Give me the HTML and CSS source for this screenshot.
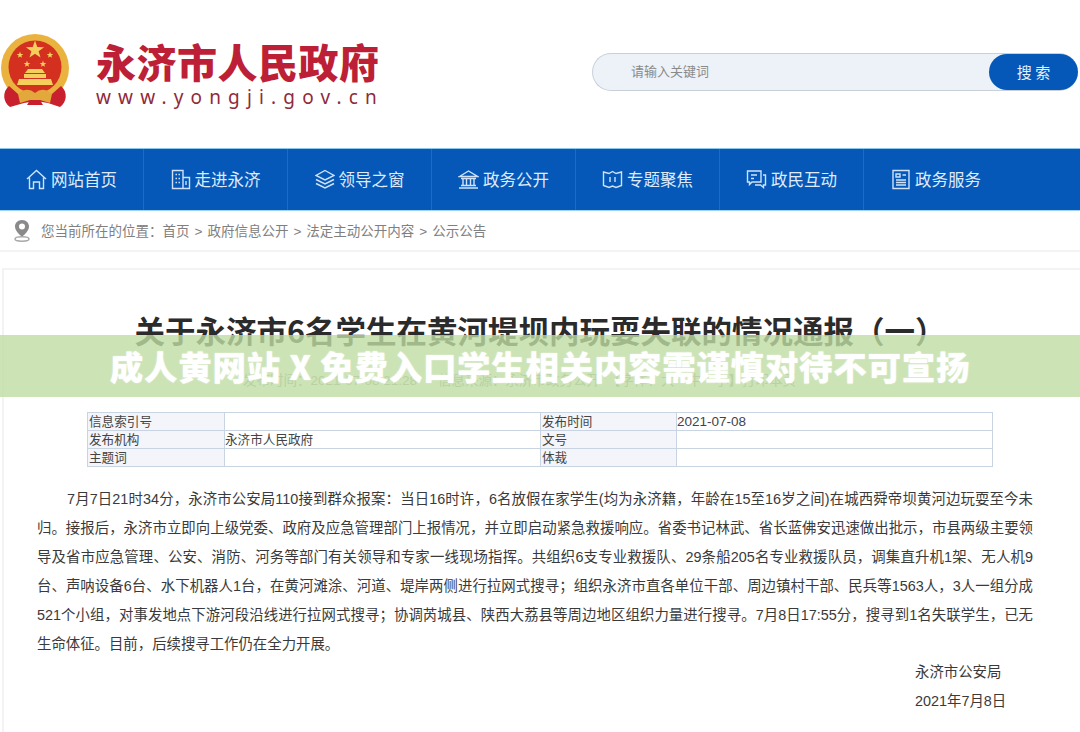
FILE: index.html
```html
<!DOCTYPE html>
<html lang="zh-CN">
<head>
    <meta charset="UTF-8">
    <title>永济市人民政府</title>
    <link rel="stylesheet" href="styles.css">
</head>
<body>
    <div class="header">
        <div class="logo">
            <svg class="emblem" width="72" height="74" viewBox="0 0 72 74">
                <defs>
                    <path id="star" d="M0 -5 L1.200 -1.600 L4.800 -1.500 L1.900 0.600 L2.900 4 L0 2 L-2.900 4 L-1.900 0.600 L-4.800 -1.500 L-1.200 -1.600 Z"/>
                </defs>
                <circle cx="35" cy="34" r="34" fill="#eab33f"/>
                <circle cx="35" cy="33" r="26.500" fill="#d4301f"/>
                <g fill="#f5cf5c">
                    <use href="#star" transform="translate(35 16) scale(1.900)"/>
                    <use href="#star" transform="translate(20 21) scale(0.700)"/>
                    <use href="#star" transform="translate(50 21) scale(0.700)"/>
                    <use href="#star" transform="translate(27 30) scale(0.700)"/>
                    <use href="#star" transform="translate(43 30) scale(0.700)"/>
                    <path d="M28 35 L42 35 L45 39 L25 39 Z M24 40 L46 40 L46 44 L24 44 Z M19 45 L51 45 L53 51 L17 51 Z"/>
                </g>
                <path d="M9 52 C2 58 3 68 10 73 L24 69 L36 67 L48 69 L60 73 C67 68 68 58 61 52 L52 60 L18 60 Z" fill="#c8202c"/>
                <path d="M18 60 Q27 52 35 59 Q43 52 52 60 L50 69 L40 66 L30 66 L20 69 Z" fill="#e3a83c"/>
                <path d="M27 71 L43 71 L40 66 L30 66 Z" fill="#c8202c"/>
            </svg>
            <div class="logo-text">
                <div class="logo-name">永济市人民政府</div>
                <div class="logo-url">www.yongji.gov.cn</div>
            </div>
        </div>
        <div class="search">
            <span class="search-hint">请输入关键词</span>
            <button class="search-btn">搜 索</button>
        </div>
    </div>

    <div class="nav">
        <div class="nav-item">
            <svg width="21" height="21" viewBox="0 0 21 21"><path d="M1 10 L10.500 1.500 L20 10 M3.500 8.500 V19.500 H7.500 V13 H13.500 V19.500 H17.500 V8.500"/></svg>
            <span>网站首页</span>
        </div>
        <div class="nav-item">
            <svg width="20" height="21" viewBox="0 0 20 21"><path d="M1.500 19.500 V1.500 H12 V19.500 Z M12 8.500 H18.500 V19.500 H1 M4.500 5.500 H6 M7.500 5.500 H9 M4.500 9.500 H6 M7.500 9.500 H9 M4.500 13.500 H6 M7.500 13.500 H9 M15 12 V16"/></svg>
            <span>走进永济</span>
        </div>
        <div class="nav-item">
            <svg width="20" height="21" viewBox="0 0 20 21"><path d="M10 1.500 L19 6.500 L10 11 L1 6.500 Z M1 10.500 L10 15 L19 10.500 M1 14.500 L10 19 L19 14.500"/></svg>
            <span>领导之窗</span>
        </div>
        <div class="nav-item">
            <svg width="21" height="21" viewBox="0 0 21 21"><path d="M1.500 7.500 L10.500 2 L19.500 7.500 Z M3 9.500 H18 M5 10 V16 M8.500 10 V16 M12.500 10 V16 M16 10 V16 M3 16.500 H18 M1 19 H20"/></svg>
            <span>政务公开</span>
        </div>
        <div class="nav-item">
            <svg width="21" height="21" viewBox="0 0 21 21"><path d="M1.500 3 L7 4.500 L10.500 2.500 L14 4.500 L19.500 3 V16.500 L14 18.500 L10.500 17 L7 18.500 L1.500 16.500 Z M8 8 V13 M13 8 V13"/></svg>
            <span>专题聚焦</span>
        </div>
        <div class="nav-item">
            <svg width="21" height="21" viewBox="0 0 21 21"><path d="M1.500 2 H15 V13 H6 L3.500 15.500 V13 H1.500 Z M5 6 H11 M5 9.500 H8 M17 6 H19.500 V16 H17.500 V18.500 L14.500 16 H9"/></svg>
            <span>政民互动</span>
        </div>
        <div class="nav-item">
            <svg width="20" height="21" viewBox="0 0 20 21"><path d="M2 1.500 H18 V19.500 H2 Z M5 5 H9 V8 H5 Z M11.500 6 H15 M5 11 H15 M5 13.500 H15 M5 16 H15"/></svg>
            <span>政务服务</span>
        </div>
    </div>

    <div class="crumbs">
        <svg width="18" height="23" viewBox="0 0 18 23">
            <path d="M9 1 C4.500 1 2 4.200 2 7.500 C2 11.500 6 15 9 18 C12 15 16 11.500 16 7.500 C16 4.200 13.500 1 9 1 Z M9 4.500 A3 3 0 1 0 9 10.500 A3 3 0 1 0 9 4.500 Z" fill="#8a8a8a" fill-rule="evenodd"/>
            <ellipse cx="9" cy="20" rx="7" ry="2.200" fill="none" stroke="#a8a8a8" stroke-width="1.500"/>
        </svg>
        <span class="crumb-text">您当前所在的位置：首页<span class="sep">&gt;</span>政府信息公开<span class="sep">&gt;</span>法定主动公开内容<span class="sep">&gt;</span>公示公告</span>
    </div>

    <div class="article">
        <h1 class="article-title">关于永济市6名学生在黄河堤坝内玩耍失联的情况通报（一）</h1>
        <div class="article-meta">
            <span>发布时间：2021-07-08 21:28</span>
            <span>信息来源：永济市政务公开</span>
            <span>【字体：大　中　小】打印本页</span>
        </div>

        <table class="info">
            <tr>
                <th>信息索引号</th><td></td>
                <th>发布时间</th><td class="date">2021-07-08</td>
            </tr>
            <tr>
                <th>发布机构</th><td>永济市人民政府</td>
                <th>文号</th><td></td>
            </tr>
            <tr>
                <th>主题词</th><td></td>
                <th>体裁</th><td></td>
            </tr>
        </table>

        <div class="body-text">
            <div class="line first">7月7日21时34分，永济市公安局110接到群众报案：当日16时许，6名放假在家学生(均为永济籍，年龄在15至16岁之间)在城西舜帝坝黄河边玩耍至今未</div>
            <div class="line">归。接报后，永济市立即向上级党委、政府及应急管理部门上报情况，并立即启动紧急救援响应。省委书记林武、省长蓝佛安迅速做出批示，市县两级主要领</div>
            <div class="line">导及省市应急管理、公安、消防、河务等部门有关领导和专家一线现场指挥。共组织6支专业救援队、29条船205名专业救援队员，调集直升机1架、无人机9</div>
            <div class="line">台、声呐设备6台、水下机器人1台，在黄河滩涂、河道、堤岸两侧进行拉网式搜寻；组织永济市直各单位干部、周边镇村干部、民兵等1563人，3人一组分成</div>
            <div class="line">521个小组，对事发地点下游河段沿线进行拉网式搜寻；协调芮城县、陕西大荔县等周边地区组织力量进行搜寻。7月8日17:55分，搜寻到1名失联学生，已无</div>
            <div class="line last">生命体征。目前，后续搜寻工作仍在全力开展。</div>
        </div>

        <div class="sign">
            <div>永济市公安局</div>
            <div>2021年7月8日</div>
        </div>
    </div>

    <div class="banner">成人黄网站 X 免费入口学生相关内容需谨慎对待不可宣扬</div>
</body>
</html>
```

FILE: styles.css
```css
html, body {
    height: 732px;
    overflow: hidden;
}
body {
    margin: 0;
    padding: 0;
    position: relative;
    background-color: #ffffff;
    color: #333333;
    font-family: "Liberation Sans", "Noto Sans CJK SC", sans-serif;
}

/* top area with logo and search */
.header {
    height: 148px;
    display: flex;
    justify-content: space-between;
    box-sizing: border-box;
    padding: 34px 2px 0 0;
}
.logo {
    display: flex;
    align-items: flex-start;
    gap: 24px;
}
.emblem {
    flex: none;
}
.logo-text {
    display: flex;
    flex-direction: column;
}
.logo-name {
    color: #bd1f37;
    font-size: 40px;
    line-height: 44px;
    font-weight: 900;
    margin-top: 5px;
    letter-spacing: 0.5px;
    font-family: "Noto Sans CJK SC", sans-serif;
}
.logo-url {
    color: #8f2a3c;
    font-size: 19px;
    line-height: 22px;
    letter-spacing: 7.150px;
    margin-top: 3px;
    font-family: "Noto Sans", sans-serif;
}
.search {
    width: 486px;
    height: 38px;
    margin-top: 19px;
    display: flex;
    justify-content: space-between;
    align-items: center;
    box-sizing: border-box;
    background-color: #edf2f9;
    border: 1px solid #c9d0da;
    border-right: none;
    border-radius: 19px;
}
.search-hint {
    font-size: 13px;
    color: #8a8a8a;
    margin-left: 38px;
    padding-bottom: 3px;
}
.search-btn {
    width: 89px;
    height: 36px;
    border: none;
    border-radius: 18px;
    background-color: #0558b8;
    color: #e8f0fa;
    font-size: 15px;
    padding-bottom: 3px;
    font-family: "Noto Sans CJK SC", sans-serif;
}

/* main nav */
.nav {
    height: 63px;
    display: flex;
    box-sizing: border-box;
    background-color: #0558b8;
    border-top: 1px solid #8cc6ee;
    border-bottom: 1px solid #9fd4f5;
}
.nav-item {
    width: 144px;
    display: flex;
    align-items: center;
    justify-content: center;
    gap: 4px;
    box-sizing: border-box;
    border-right: 1px solid #2269c0;
    color: #dfeafa;
    font-size: 16.500px;
}
.nav-item span {
    padding-bottom: 2px;
}
.nav-item:last-child {
    border-right: none;
}
.nav-item svg {
    fill: none;
    stroke: #cfe2f8;
    stroke-width: 1.400;
}

/* where am I */
.crumbs {
    height: 41px;
    display: flex;
    align-items: center;
    gap: 10px;
    padding-left: 13px;
    box-sizing: border-box;
    font-size: 13.500px;
    color: #808080;
    border-bottom: 2px solid #f3f3f3;
}
.crumb-text {
    padding-bottom: 2px;
}
.sep {
    margin: 0 5px;
}

/* article */
.article {
    position: relative;
    margin: 16px 0 0 2px;
    height: 464px;
    box-sizing: border-box;
    padding-top: 42px;
    border-left: 2px solid #f3f3f3;
    border-top: 2px solid #f3f3f3;
}
.article-title {
    margin: 0 0 0 -4px;
    text-align: center;
    font-size: 30.500px;
    line-height: 36px;
    font-weight: 700;
    color: #2b2b2b;
    white-space: nowrap;
    font-family: "Noto Sans CJK SC", sans-serif;
}
.article-meta {
    margin-top: 23px;
    padding-left: 239px;
    height: 20px;
    line-height: 20px;
    display: flex;
    font-size: 13.500px;
    color: #a0a0a0;
}
.article-meta span:nth-child(1) {
    width: 195px;
}
.article-meta span:nth-child(2) {
    width: 169px;
}
.info {
    margin: 21px 0 0 83px;
    width: 906px;
    border-collapse: collapse;
    table-layout: fixed;
    font-size: 12.600px;
    color: #444444;
}
.info th, .info td {
    height: 18px;
    box-sizing: border-box;
    padding: 0;
    line-height: 16px;
    text-align: left;
    font-weight: 400;
    border: 1px solid #c9d4e2;
}
.info th {
    background-color: #f3f5fa;
    padding-left: 1px;
}
.info th:nth-child(1) {
    width: 137px;
}
.info td:nth-child(2) {
    width: 316px;
}
.info th:nth-child(3) {
    width: 136px;
}
.info .date {
    font-size: 13.500px;
}

.body-text {
    margin-top: 18px;
    padding: 0 47px 0 33px;
    font-size: 14.400px;
    line-height: 29px;
    color: #3a3a3a;
}
.line {
    white-space: nowrap;
    text-align: justify;
    text-align-last: justify;
}
.line.first {
    padding-left: 30px;
}
.line.last {
    text-align-last: left;
}
.sign {
    margin: -1px 0 0 911px;
    font-size: 14.400px;
    line-height: 29px;
    color: #3a3a3a;
}

/* strip across the middle of the page */
.banner {
    position: absolute;
    left: 0;
    right: 0;
    top: 335px;
    height: 62px;
    line-height: 62px;
    text-align: center;
    background-color: rgba(190, 220, 163, 0.8);
    color: #ffffff;
    font-size: 33.500px;
    font-weight: 900;
    letter-spacing: 0.7px;
    font-family: "Noto Sans CJK SC", sans-serif;
    text-shadow: 0 0 2px rgba(255, 255, 255, 0.6);
}
```
